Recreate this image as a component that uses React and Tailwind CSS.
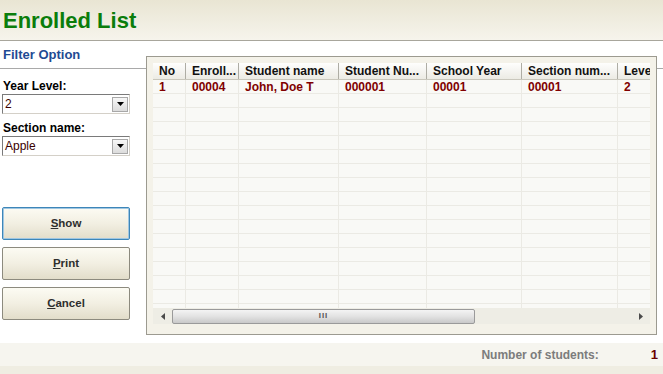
import React from "react";

const columns = [
  { label: "No", width: "w-[33px]" },
  { label: "Enroll...", width: "w-[53px]" },
  { label: "Student name", width: "w-[100px]" },
  { label: "Student Nu...", width: "w-[88px]" },
  { label: "School Year", width: "w-[95px]" },
  { label: "Section num...", width: "w-[96px]" },
  { label: "Leve", width: "w-[40px]" },
];

const firstRow = ["1", "00004", "John, Doe T", "000001", "00001", "00001", "2"];

function Select({ value }) {
  return (
    <div className="mx-[2px] flex h-[20px] w-[128px] items-center border border-[#7a7a7a] border-r-[#d4d0c8] border-b-[#d4d0c8] bg-white">
      <span className="flex-1 pl-[2px] text-[12px] leading-none text-[#3a0000]">{value}</span>
      <div className="mr-[1px] flex h-[15px] w-[16px] items-center justify-center border border-[#a8a8a8] bg-gradient-to-b from-[#f7f7f7] to-[#dcdcdc]">
        <svg width="7" height="4" viewBox="0 0 7 4">
          <path d="M0 0h7L3.5 4z" fill="#000" />
        </svg>
      </div>
    </div>
  );
}

function Button({ children, focused }) {
  return (
    <button
      className={
        "mx-[2px] h-[33px] w-[128px] rounded-[2px] border bg-gradient-to-b from-[#fcfbf3] via-[#f2efe2] to-[#e2ddca] text-[11.5px] font-bold text-[#2e2e2e] " +
        (focused ? "border-[#3d86b8] shadow-[inset_0_0_0_1px_#9fc6e2]" : "border-[#8c8a7e]")
      }
    >
      {children}
    </button>
  );
}

export default function App() {
  return (
    <div className="flex h-[374px] w-[663px] flex-col overflow-hidden bg-white font-['Liberation_Sans',Arial,sans-serif]">
      {/* title */}
      <div className="flex h-[41px] items-center border-b border-[#a8a69c] bg-gradient-to-b from-[#e9e5d3] to-[#f6f4ec] pl-[3px]">
        <h1 className="text-[22px] font-bold text-[#0b7d0b]">Enrolled List</h1>
      </div>

      <div className="flex h-[302px]">
        {/* filter column */}
        <div className="flex w-[146px] flex-col">
          <div className="flex h-[28px] items-end border-b border-[#a9a9a9] pb-[4px] pl-[3px]">
            <span className="text-[13px] font-bold text-[#1f4a93]">Filter Option</span>
          </div>
          <div className="mt-[10px] pl-[3px] text-[12px] font-bold leading-[14px] text-black">Year Level:</div>
          <div className="mt-[1px]">
            <Select value="2" />
          </div>
          <div className="mt-[7px] pl-[3px] text-[12px] font-bold leading-[14px] text-black">Section name:</div>
          <div className="mt-[1px]">
            <Select value="Apple" />
          </div>
          <div className="mt-[51px] flex flex-col gap-[7px]">
            <Button focused>
              <u>S</u>how
            </Button>
            <Button>
              <u>P</u>rint
            </Button>
            <Button>
              <u>C</u>ancel
            </Button>
          </div>
        </div>

        {/* grid panel */}
        <div className="mt-[15px] h-[279px] w-[511px] border border-[#9c9a90] bg-[#f4f2e9] p-[6px]">
          <div className="flex h-[245px] flex-col overflow-hidden bg-[#f9f9f6]">
            <div className="flex h-[17px] shrink-0 border-b border-[#c9c7bc] bg-gradient-to-b from-[#fefefd] to-[#ecebe4]">
              {columns.map((c) => (
                <div
                  key={c.label}
                  className={c.width + " shrink-0 truncate border-r border-[#aeada4] pl-[6px] text-[12px] font-bold leading-[17px] text-[#111]"}
                >
                  {c.label}
                </div>
              ))}
            </div>
            {Array.from({ length: 17 }).map((_, r) => (
              <div key={r} className="flex h-[14px] shrink-0 border-b border-[#ebeae4]">
                {columns.map((c, i) => (
                  <div
                    key={c.label}
                    className={c.width + " shrink-0 border-r border-[#ebeae4] pl-[6px] text-[12px] font-bold leading-[15px] text-[#800000]"}
                  >
                    {r === 0 ? firstRow[i] : ""}
                  </div>
                ))}
              </div>
            ))}
          </div>
          {/* scrollbar */}
          <div className="flex h-[16px] items-center bg-[#eeede5]">
            <div className="flex w-[19px] items-center justify-center">
              <svg width="4" height="7" viewBox="0 0 4 7">
                <path d="M4 0v7L0 3.5z" fill="#4a4a4a" />
              </svg>
            </div>
            <div className="flex h-[15px] w-[303px] items-center justify-center rounded-[2px] border border-[#9a9a9a] bg-gradient-to-b from-[#f4f4f4] via-[#e2e2e2] to-[#c9c9c9]">
              <span className="text-[8px] font-bold leading-none tracking-[1px] text-[#555]">III</span>
            </div>
            <div className="flex-1" />
            <div className="flex w-[19px] items-center justify-center">
              <svg width="4" height="7" viewBox="0 0 4 7">
                <path d="M0 0v7L4 3.5z" fill="#4a4a4a" />
              </svg>
            </div>
          </div>
        </div>

        <div className="flex-1">
          <div className="h-[28px] border-b border-[#a9a9a9]" />
        </div>
      </div>

      {/* footer */}
      <div className="flex h-[23px] items-center justify-end bg-[#f6f5ef] pr-[5px]">
        <span className="text-[12px] font-bold text-[#7c7c7c]">Number of students:</span>
        <span className="ml-[52px] text-[13px] font-bold text-[#6a0000]">1</span>
      </div>
      <div className="flex-1 bg-[#efede2]" />
    </div>
  );
}
